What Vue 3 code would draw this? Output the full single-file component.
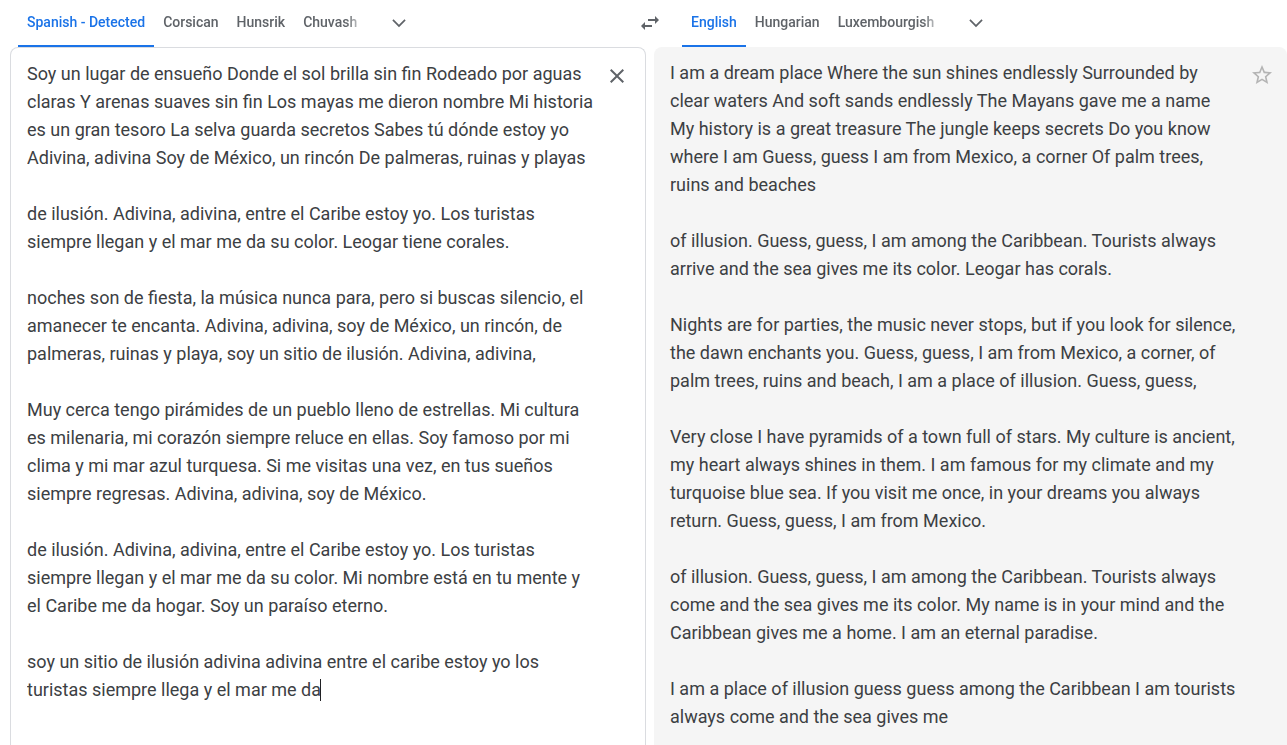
<script setup>
import { ref } from 'vue'

const sourceLanguages = ['Spanish - Detected', 'Corsican', 'Hunsrik', 'Chuvash']
const targetLanguages = ['English', 'Hungarian', 'Luxembourgish']
const source = ref(0)
const target = ref(0)

const sourceText = ref(
  [
    'Soy un lugar de ensueño Donde el sol brilla sin fin Rodeado por aguas claras Y arenas suaves sin fin Los mayas me dieron nombre Mi historia es un gran tesoro La selva guarda secretos Sabes tú dónde estoy yo Adivina, adivina Soy de México, un rincón De palmeras, ruinas y playas',
    'de ilusión. Adivina, adivina, entre el Caribe estoy yo. Los turistas siempre llegan y el mar me da su color. Leogar tiene corales.',
    'noches son de fiesta, la música nunca para, pero si buscas silencio, el amanecer te encanta. Adivina, adivina, soy de México, un rincón, de palmeras, ruinas y playa, soy un sitio de ilusión. Adivina, adivina,',
    'Muy cerca tengo pirámides de un pueblo lleno de estrellas. Mi cultura es milenaria, mi corazón siempre reluce en ellas. Soy famoso por mi clima y mi mar azul turquesa. Si me visitas una vez, en tus sueños siempre regresas. Adivina, adivina, soy de México.',
    'de ilusión. Adivina, adivina, entre el Caribe estoy yo. Los turistas siempre llegan y el mar me da su color. Mi nombre está en tu mente y el Caribe me da hogar. Soy un paraíso eterno.',
    'soy un sitio de ilusión adivina adivina entre el caribe estoy yo los turistas siempre llega y el mar me da'
  ].join('\n\n')
)

const translation = [
  'I am a dream place Where the sun shines endlessly Surrounded by clear waters And soft sands endlessly The Mayans gave me a name My history is a great treasure The jungle keeps secrets Do you know where I am Guess, guess I am from Mexico, a corner Of palm trees, ruins and beaches',
  'of illusion. Guess, guess, I am among the Caribbean. Tourists always arrive and the sea gives me its color. Leogar has corals.',
  'Nights are for parties, the music never stops, but if you look for silence, the dawn enchants you. Guess, guess, I am from Mexico, a corner, of palm trees, ruins and beach, I am a place of illusion. Guess, guess,',
  'Very close I have pyramids of a town full of stars. My culture is ancient, my heart always shines in them. I am famous for my climate and my turquoise blue sea. If you visit me once, in your dreams you always return. Guess, guess, I am from Mexico.',
  'of illusion. Guess, guess, I am among the Caribbean. Tourists always come and the sea gives me its color. My name is in your mind and the Caribbean gives me a home. I am an eternal paradise.',
  'I am a place of illusion guess guess among the Caribbean I am tourists always come and the sea gives me'
]
</script>

<template>
  <main class="translator">
    <header class="columns languages">
      <div class="side">
        <div class="tabs" role="tablist" aria-label="Source language">
          <button
            v-for="(name, i) in sourceLanguages"
            :key="name"
            type="button"
            role="tab"
            class="tab"
            :class="{ active: source === i }"
            :aria-selected="source === i"
            @click="source = i"
          >{{ name }}</button>
        </div>
        <button type="button" class="icon-button" aria-label="More source languages">
          <svg width="20" height="20" viewBox="0 0 24 24"><path d="M5.41 7.59L4 9l8 8 8-8-1.41-1.41L12 14.17z" /></svg>
        </button>
        <button type="button" class="icon-button swap" aria-label="Swap languages">
          <svg width="24" height="24" viewBox="0 0 24 24"><path d="M6.99 11L3 15l3.99 4v-3H14v-2H6.99v-3zM21 9l-3.99-4v3H10v2h7.01v3L21 9z" /></svg>
        </button>
      </div>
      <div class="side side-target">
        <div class="tabs" role="tablist" aria-label="Target language">
          <button
            v-for="(name, i) in targetLanguages"
            :key="name"
            type="button"
            role="tab"
            class="tab"
            :class="{ active: target === i }"
            :aria-selected="target === i"
            @click="target = i"
          >{{ name }}</button>
        </div>
        <button type="button" class="icon-button" aria-label="More target languages">
          <svg width="20" height="20" viewBox="0 0 24 24"><path d="M5.41 7.59L4 9l8 8 8-8-1.41-1.41L12 14.17z" /></svg>
        </button>
      </div>
    </header>

    <div class="columns panels">
      <section class="panel panel-source">
        <div class="editor">
          <textarea v-model="sourceText" class="text" rows="23" aria-label="Source text" spellcheck="false"></textarea>
          <span class="caret"></span>
        </div>
        <button type="button" class="icon-button action" aria-label="Clear source text" @click="sourceText = ''">
          <svg width="24" height="24" viewBox="0 0 24 24"><path d="M19 6.41L17.59 5 12 10.59 6.41 5 5 6.41 10.59 12 5 17.59 6.41 19 12 13.41 17.59 19 19 17.59 13.41 12z" /></svg>
        </button>
      </section>
      <section class="panel panel-target">
        <div class="text result" lang="en">
          <p v-for="paragraph in translation" :key="paragraph">{{ paragraph }}</p>
        </div>
        <button type="button" class="icon-button action star" aria-label="Save translation">
          <svg width="24" height="24" viewBox="0 0 24 24"><path d="M22 9.24l-7.19-.62L12 2 9.19 8.63 2 9.24l5.46 4.73L5.82 21 12 17.27 18.18 21l-1.63-7.03L22 9.24zM12 15.4l-3.76 2.27 1-4.28-3.32-2.88 4.38-.38L12 6.1l1.71 4.04 4.38.38-3.32 2.88 1 4.28L12 15.4z" /></svg>
        </button>
      </section>
    </div>
  </main>
</template>

<style>
body {
  margin: 0;
  background: #fff;
}
</style>

<style scoped>
.translator {
  box-sizing: border-box;
  display: flex;
  flex-direction: column;
  min-height: 100vh;
  padding-left: 10px;
  font-family: Roboto, "Liberation Sans", sans-serif;
  color: #3c4043;
}

.columns {
  display: grid;
  grid-template-columns: minmax(0, 636fr) minmax(0, 633fr);
  column-gap: 8px;
}

.languages {
  height: 47px;
}

.side {
  display: flex;
  align-items: stretch;
  padding-left: 8px;
}

.side-target {
  padding-left: 28px;
}

.tabs {
  display: flex;
  mask-image: linear-gradient(to right, #000 calc(100% - 20px), transparent);
}

button {
  border: 0;
  background: none;
  font: inherit;
  cursor: pointer;
}

.tab {
  padding: 0 9px 2px;
  border-bottom: 2px solid transparent;
  color: #5f6368;
  font-size: 14px;
  font-weight: 500;
  line-height: 20px;
  white-space: nowrap;
}

.tab.active {
  border-bottom-color: #1a73e8;
  color: #1a73e8;
}

.icon-button {
  display: flex;
  flex: none;
  align-items: center;
  justify-content: center;
  width: 48px;
  height: 46px;
  margin-left: 9px;
  padding: 0;
}

.icon-button svg {
  display: block;
  fill: #5f6368;
}

.swap {
  margin-right: -28px;
  margin-left: auto;
}

.panels {
  flex: 1;
}

.panel {
  display: flex;
  align-items: flex-start;
  box-sizing: border-box;
  padding: 12px 8px 12px 16px;
  border-radius: 8px 8px 0 0;
}

.panel-source {
  border: 1px solid #dadce0;
  border-bottom: 0;
}

.panel-target {
  padding-right: 1px;
  background: #f5f5f5;
}

.editor {
  position: relative;
  display: flex;
  flex: 1;
  min-width: 0;
}

.text {
  flex: 1;
  min-width: 0;
  font-size: 18px;
  line-height: 28px;
}

textarea {
  display: block;
  margin: 0;
  padding: 0;
  border: 0;
  outline: 0;
  overflow: hidden;
  resize: none;
  background: none;
  color: inherit;
  font-family: inherit;
}

.caret {
  position: absolute;
  bottom: 3px;
  left: 293px;
  width: 1px;
  height: 22px;
  background: #202124;
}

.result p {
  margin: 0 0 28px;
}

.result p:last-child {
  margin-bottom: 0;
}

.action {
  width: 40px;
  height: 32px;
  margin-left: 0;
}

.star {
  width: 48px;
}

.star svg {
  fill: #b4b4b4;
}
</style>
